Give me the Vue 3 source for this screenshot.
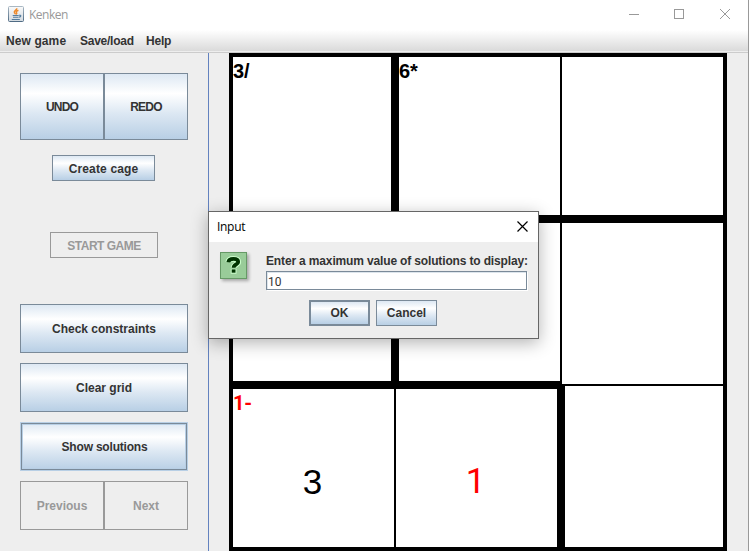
<script setup>
const menus = [
  { label: 'New game', cls: 'm-new' },
  { label: 'Save/load', cls: 'm-save' },
  { label: 'Help', cls: 'm-help' },
]
const cells = [
  { cage: '3/', walls: 'top left right' },
  { cage: '6*', walls: 'top left bottom' },
  { walls: 'top right bottom' },
  { walls: 'left right bottom' },
  { walls: 'top left bottom' },
  { walls: 'top right' },
  { cage: '1-', value: '3', cageError: true, walls: 'top left bottom' },
  { value: '1', error: true, walls: 'top right bottom' },
  { walls: 'left right bottom' },
]
</script>

<template>
  <div class="window">
    <header class="titlebar">
      <svg class="java" width="16" height="16" viewBox="0 0 16 16">
        <defs>
          <linearGradient id="jbg" x1="0" y1="0" x2="0" y2="1">
            <stop offset="0" stop-color="#fafafa" />
            <stop offset="1" stop-color="#d3dae0" />
          </linearGradient>
          <linearGradient id="jbd" x1="0" y1="0" x2="0" y2="1">
            <stop offset="0" stop-color="#a9b8c4" />
            <stop offset="1" stop-color="#4f6b84" />
          </linearGradient>
        </defs>
        <rect x=".5" y=".5" width="15" height="15" rx="1" fill="url(#jbg)" stroke="url(#jbd)" />
        <path d="M8.7 2.2C9.2 4 5.6 4.8 6.4 6.5c.3.7 1 1 .9 1.9M10.4 4.2C8.6 5 7.9 5.6 8.5 6.5c.5.7.3 1.3-.4 1.9" fill="none" stroke="#ee8a2c" stroke-width="1.5" />
        <path d="M4.7 9.5h6M5 11.300h5.4M3.800 13.500h8M11 9.300c2.500-.6 2.500 1.500-.2 2" fill="none" stroke="#557d9e" stroke-width="1.100" />
      </svg>
      <span class="title">Kenken</span>
      <svg class="controls" width="110" height="12" viewBox="0 0 110 12" fill="none" stroke="#999">
        <path d="M0 5.500h10M45.500.500h9v9h-9z" shape-rendering="crispEdges" />
        <path d="M91 0l10 10M101 0l-10 10" />
      </svg>
    </header>
    <nav class="menubar">
      <span v-for="m in menus" :key="m.label" :class="m.cls">{{ m.label }}</span>
    </nav>
    <main class="content">
      <aside class="side">
        <div class="pair tall">
          <button class="btn"><span class="t-undo">UNDO</span></button>
          <button class="btn"><span class="t-redo">REDO</span></button>
        </div>
        <button class="btn create"><span class="t-create">Create cage</span></button>
        <button class="btn start" disabled><span class="t-start">START GAME</span></button>
        <button class="btn wide">Check constraints</button>
        <button class="btn wide">Clear grid</button>
        <button class="btn wide focused"><span class="t-show">Show solutions</span></button>
        <div class="pair">
          <button class="btn" disabled>Previous</button>
          <button class="btn" disabled>Next</button>
        </div>
      </aside>
      <section class="board">
        <div v-for="(c, i) in cells" :key="i" class="cell" :class="c.walls">
          <span v-if="c.cage" class="cage" :class="{ error: c.cageError }">{{ c.cage }}</span>
          <span v-if="c.value" class="value" :class="{ error: c.error }">{{ c.value }}</span>
        </div>
      </section>
    </main>

    <div class="dialog">
      <div class="dialog-title">
        <span class="dialog-name">Input</span>
        <svg width="11" height="11" viewBox="0 0 11 11" fill="none" stroke="#000" stroke-width="1.200">
          <path d="M.5.500l10 10M10.500.500l-10 10" />
        </svg>
      </div>
      <div class="dialog-body">
        <div class="question"><svg width="25" height="25" viewBox="0 0 25 25" fill="none">
          <g stroke="#ccffcc" stroke-width="5.800">
            <path d="M7.300 9.200C7.700 6.300 10 5.900 12.400 5.900C15.600 5.900 17.200 7 17.200 9C17.200 11.600 12.600 11.400 12.600 14.800" />
            <path d="M12.600 15.800v4.900" />
          </g>
          <g stroke="#003300" stroke-width="3.800">
            <path d="M7.300 9.200C7.700 6.300 10 5.900 12.400 5.900C15.600 5.900 17.200 7 17.200 9C17.200 11.600 12.600 11.400 12.600 14.800" />
            <path d="M12.600 16.400v3.300" />
          </g>
        </svg></div>
        <div class="form">
          <label class="prompt">Enter a maximum value of solutions to display:</label>
          <div class="field">10</div>
          <div class="actions">
            <button class="btn default">OK</button>
            <button class="btn">Cancel</button>
          </div>
        </div>
      </div>
    </div>
  </div>
</template>

<style>
body { margin: 0; overflow: hidden; }
</style>

<style scoped>
* { box-sizing: border-box; }
.window {
  position: relative;
  width: 749px;
  height: 551px;
  overflow: hidden;
  display: flex;
  flex-direction: column;
  background: #eee;
  border-right: 1px solid #999;
  font: bold 12px/14px "Liberation Sans", Arial, sans-serif;
  color: #333;
}
.titlebar {
  height: 30px;
  flex: none;
  display: flex;
  align-items: flex-start;
  background: #fff;
}
.java { margin: 6px 0 0 8px; }
.title {
  margin: 6px 0 0 5px;
  font: 12px/17px "Open Sans", "Noto Sans", sans-serif;
  letter-spacing: -.5px;
  color: #999;
}
.controls { margin: 9px 9px 0 auto; }
.menubar {
  height: 23px;
  flex: none;
  display: flex;
  padding: 4px 0 0 6px;
  background: linear-gradient(#fff, #dadada 21px, #eee 21px);
  border-bottom: 1px solid #ccc;
}
.menubar span { white-space: nowrap; }
.m-new { width: 74px; letter-spacing: .1px; }
.m-save { width: 66px; letter-spacing: -.25px; }
.m-help { letter-spacing: -.2px; }
.t-undo, .t-redo { letter-spacing: -.8px; }
.t-create { letter-spacing: .15px; padding-top: 1px; }
.t-start { letter-spacing: -.5px; padding-top: 1px; }
.t-show { letter-spacing: -.2px; padding-left: 1px; }
.content { display: flex; height: 498px; }
.side {
  width: 209px;
  padding: 20px 20px 0;
  display: flex;
  flex-direction: column;
  align-items: flex-start;
  border-right: 1px solid #6382bf;
}
.btn {
  display: flex;
  align-items: center;
  justify-content: center;
  padding: 0;
  border: 1px solid #7a8a99;
  border-radius: 0;
  background: linear-gradient(#dde8f3, #fff 30%, #dde8f3 60%, #b8cfe5);
  font: inherit;
  color: #333;
  white-space: nowrap;
}
.btn:disabled { background: #eee; color: #999; border-color: #999; }
.pair { display: flex; height: 49px; }
.pair .btn { width: 84px; }
.tall { height: 67px; }
.create { width: 103px; height: 26px; margin: 15px 0 51px 32px; }
.start { width: 108px; height: 26px; margin: 0 0 46px 30px; }
.wide { width: 168px; height: 49px; margin-bottom: 10px; }
.focused {
  border: 1px solid #b8cfe5;
  box-shadow: inset 0 0 0 1px #7a8a99, inset 0 0 0 2px #b8cfe5;
}
.board {
  width: 498px;
  margin-left: 20px;
  display: grid;
  grid-template: repeat(3, 166px) / repeat(3, 166px);
}
.cell {
  display: grid;
  background: #fff;
  border: 1px solid #000;
  overflow: hidden;
}
.top { border-top-width: 4px; }
.left { border-left-width: 4px; }
.right { border-right-width: 4px; }
.bottom { border-bottom-width: 4px; }
.cage, .value { grid-area: 1 / 1; color: #000; }
.cage { font-size: 20px; line-height: 23px; padding-top: 3px; letter-spacing: -.2px; }
.value {
  font-weight: normal;
  font-size: 35px;
  line-height: 40px;
  align-self: center;
  justify-self: center;
  padding: 28px 2px 0 0;
}
.cage.error, .value.error {
  color: #f00;
  font-family: Roboto, "Liberation Sans", sans-serif;
}
.dialog {
  position: absolute;
  left: 208px;
  top: 211px;
  width: 331px;
  height: 128px;
  background: #eee;
  border: 1px solid #666;
  box-shadow: 0 4px 16px rgba(0, 0, 0, .3);
}
.dialog-title {
  height: 30px;
  padding: 0 10px 1px 8px;
  display: flex;
  align-items: center;
  justify-content: space-between;
  background: #fff;
}
.dialog-name {
  font: 12px/17px "Open Sans", "Noto Sans", sans-serif;
  letter-spacing: -.3px;
  color: #000;
}
.dialog-body { display: flex; padding: 10px 11px 0; }
.question {
  width: 27px;
  height: 27px;
  flex: none;
  background: #99cc99;
  border: 1px solid #669966;
  box-shadow: 2px 2px 3px rgba(0, 0, 0, .3);
}
.question svg { display: block; }
.form { width: 262px; margin-left: 19px; padding-top: 2px; }
.prompt { display: block; height: 17px; white-space: nowrap; letter-spacing: -.15px; }
.field {
  width: 261px;
  height: 19px;
  padding: 3px 0 0 1px;
  background: #fff;
  border: 1px solid #7a8a99;
  box-shadow: 1px 1px 0 #fff, inset 1px 1px 0 #dde5ec;
  font-weight: normal;
  font-family: Roboto, "Liberation Sans", sans-serif;
}
.actions { display: flex; gap: 6px; padding: 10px 0 0 43px; }
.actions .btn { width: 61px; height: 26px; }
.default { border-width: 2px; }
</style>
